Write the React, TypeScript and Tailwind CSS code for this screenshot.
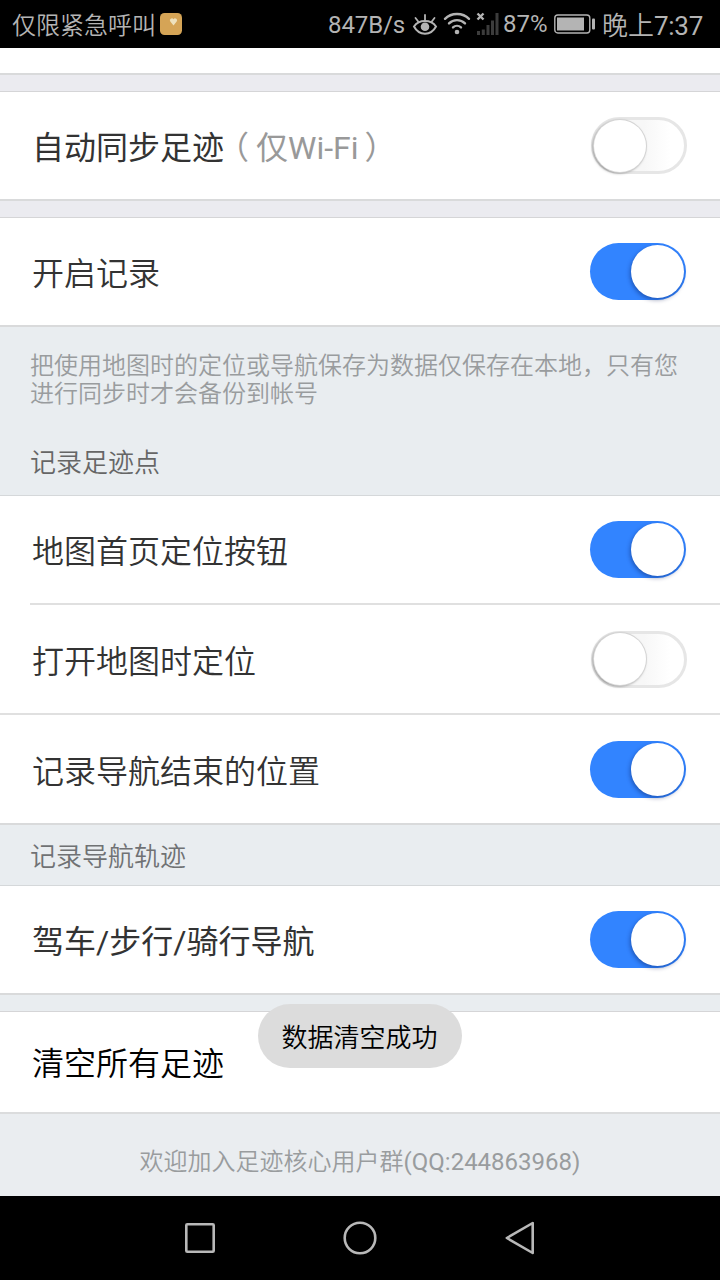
import { useState } from "react";
import clsx from "clsx";

const HINT_LINES = [
  "把使用地图时的定位或导航保存为数据仅保存在本地，只有您",
  "进行同步时才会备份到帐号",
];

const StatusBar = () => (
  <header className="flex h-12 items-center bg-black pl-3 text-2xl leading-none text-[#b4b4b4]">
    <span className="w-[148px] whitespace-nowrap pt-[3px]">仅限紧急呼叫</span>
    <svg className="h-[22px] w-[22px]" viewBox="0 0 22 22">
      <rect width="22" height="22" rx="4.5" fill="#d5a456" />
      <path
        d="M13.5 12.4 10.3 8.6a2 2 0 0 1 3.2-2.4 2 2 0 0 1 3.2 2.4z"
        fill="#eee1bd"
      />
    </svg>
    <div className="ml-[146px] flex items-center">
      <span className="w-[84px] pt-px font-normal tracking-[-0.1px]">847B/s</span>
      <svg
        className="h-6 w-[26px]"
        viewBox="0 0 26 24"
        fill="none"
        stroke="#b4b4b4"
        strokeWidth="2"
        strokeLinecap="round"
      >
        <path d="M2 14.5C7 7.2 19 7.2 24 14.5 19 24 7 24 2 14.5z" />
        <circle cx="13" cy="14.8" r="4.3" fill="#b4b4b4" stroke="none" />
        <path d="M13 8V3M6.2 9.5 3.5 6M19.8 9.5 22.5 6" strokeWidth="1.8" />
      </svg>
      <svg
        className="ml-[5px] h-6 w-7"
        viewBox="0 0 28 24"
        fill="none"
        stroke="#b4b4b4"
        strokeWidth="2.4"
        strokeLinecap="round"
      >
        <path d="M2 6.8C8.2.3 19.8.3 26 6.8M6 11.4c4.4-4.4 11.6-4.4 16 0M10 15.4c2.3-2.1 5.7-2.1 8 0" />
        <circle cx="14" cy="20" r="2.3" fill="#b4b4b4" stroke="none" />
      </svg>
      <svg className="ml-[5px] h-6 w-6" viewBox="0 0 24 24">
        <path d="m1.5 1.5 6 6m0-6-6 6" stroke="#b4b4b4" strokeWidth="2.4" />
        <path
          d="M2.5 19v4M7.3 17.5V23M12 13v10M16.5 8.5V23M21 1v22"
          stroke="#3c3c3c"
          strokeWidth="3"
        />
      </svg>
      <span className="ml-[3px] w-[50px] font-normal">87%</span>
      <svg className="ml-px h-5 w-[42px]" viewBox="0 0 42 20" fill="none">
        <rect x=".8" y="1" width="35" height="18" rx="3" stroke="#b4b4b4" strokeWidth="1.4" />
        <path d="M3 3.5h27v13H3z" fill="#b4b4b4" />
        <rect x="38" y="4.5" width="3" height="11" rx="1" fill="#b4b4b4" />
      </svg>
      <span className="ml-1.5 whitespace-nowrap pt-[3px] text-[26px]">
        晚上<span className="font-normal tracking-[-0.3px]">7:37</span>
      </span>
    </div>
  </header>
);

const Toggle = ({ initial }: { initial: boolean }) => {
  const [on, setOn] = useState(initial);
  return (
    <button
      type="button"
      role="switch"
      aria-checked={on}
      onClick={() => setOn(!on)}
      className={clsx(
        "flex h-[57px] w-24 items-center rounded-full focus:outline-none",
        on
          ? "mr-[34px] justify-end bg-[#3284ff] pr-[2px]"
          : "mr-[33px] justify-start border-[3px] border-[#e6e6e6] bg-linear-to-r from-[#f7f7f7] from-55% to-white to-85%"
      )}
    >
      <span
        className={clsx(
          "shrink-0 rounded-full bg-white",
          on
            ? "h-[53px] w-[53px] shadow-[-1px_2px_4px_rgba(0,20,80,0.4)]"
            : "h-[52px] w-[52px] shadow-[0_0_0_1px_#d4d4d4,-1px_1px_3px_rgba(0,0,0,0.5)]"
        )}
      />
    </button>
  );
};

type RowProps = {
  label: string;
  note?: string;
  on: boolean;
  className?: string;
};

const SettingRow = ({ label, note, on, className = "h-[107px] *:first:pt-1" }: RowProps) => (
  <div className={clsx("flex items-center justify-between bg-white pl-8", className)}>
    <div className="flex whitespace-nowrap text-[32px] leading-[44px] text-[#333]">
      {label}
      {note && (
        <span className="flex text-[#999]">
          <span className="ml-[9px] mr-[7px] [font-feature-settings:'halt']">（</span>
          {note}
          <span className="ml-1.5 [font-feature-settings:'halt']">）</span>
        </span>
      )}
    </div>
    <Toggle initial={on} />
  </div>
);

const Gap = ({ className = "bg-[#ebebf0]" }: { className?: string }) => (
  <div className={clsx("h-[19px] border-t-2 border-b border-t-[#d9dadb] border-b-[#d5d5d7]", className)} />
);

const Toast = ({ text }: { text: string }) => (
  <div className="absolute left-[258px] top-[1004px] flex h-16 w-[204px] items-center justify-center rounded-full bg-[#dcdcdc] pr-px pt-1 text-[26px] text-black">
    {text}
  </div>
);

const NavigationBar = () => (
  <nav className="flex h-[84px] items-center justify-center gap-[120px] bg-black">
    <svg className="h-10 w-10" viewBox="0 0 40 40" fill="none" stroke="#b8b8b8" strokeWidth="2.6">
      <rect x="6.3" y="6.3" width="27.4" height="27.4" rx="1" />
    </svg>
    <svg className="h-10 w-10" viewBox="0 0 40 40" fill="none" stroke="#b8b8b8" strokeWidth="2.6">
      <circle cx="20" cy="20" r="15.3" />
    </svg>
    <svg
      className="h-10 w-10"
      viewBox="0 0 40 40"
      fill="none"
      stroke="#b8b8b8"
      strokeWidth="2.6"
      strokeLinejoin="round"
    >
      <path d="M6.8 20 32.7 5v30z" />
    </svg>
  </nav>
);

// 350 picks the DemiLight cut of the CJK family, labels with latin text go up to 375
const App = () => (
  <div className="relative h-[1280px] w-[720px] overflow-hidden bg-white font-['Roboto','Noto_Sans_CJK_SC',sans-serif] font-[350]">
    <StatusBar />
    <main className="flex h-[1148px] flex-col">
      <div className="h-[25px] bg-white" />
      <Gap />
      <SettingRow
        label="自动同步足迹"
        note="仅Wi-Fi"
        on={false}
        className="h-[107px] font-[375] *:first:pt-1"
      />
      <Gap />
      <SettingRow label="开启记录" on />

      <div className="h-[171px] border-b border-t-2 border-b-[#d5d8da] border-t-[#d9dadb] bg-[#e9edf0] pl-[30px] pt-[25px]">
        <div className="whitespace-nowrap text-2xl leading-7 text-[#999c9e]">
          {HINT_LINES.map((line) => (
            <p key={line}>{line}</p>
          ))}
        </div>
        <h2 className="mt-9 text-[26px] leading-[38px] text-[#666]">记录足迹点</h2>
      </div>

      <SettingRow label="地图首页定位按钮" on />
      <div className="h-0.5 bg-white pl-[30px]">
        <div className="h-full bg-[#e0e0e0]" />
      </div>
      <SettingRow label="打开地图时定位" on={false} className="h-[108px] *:first:pt-[5px]" />
      <div className="h-0.5 bg-[#e0e0e0]" />
      <SettingRow label="记录导航结束的位置" on className="h-[108px] *:first:pt-[5px]" />

      <div className="flex h-[63px] items-center border-b border-t-2 border-b-[#d5d8da] border-t-[#d9dadb] bg-[#e9edf0] pl-[30px]">
        <h2 className="pt-1 text-[26px] leading-[38px] text-[#707274]">记录导航轨迹</h2>
      </div>

      <SettingRow label="驾车/步行/骑行导航" on className="h-[107px] font-[375] *:first:pt-1" />
      <Gap className="bg-[#e9edf0]" />
      <button
        type="button"
        className="h-[100px] bg-white pl-8 pt-1 text-left text-[32px] text-black"
      >
        清空所有足迹
      </button>
      <footer className="flex-1 border-t-2 border-[#dbdcdd] bg-[#eaedf0] pt-8 text-center text-2xl leading-8 text-[#999c9e]">
        欢迎加入足迹核心用户群<span className="font-normal">(QQ:244863968)</span>
      </footer>
    </main>
    <NavigationBar />
    <Toast text="数据清空成功" />
  </div>
);

export default App;
